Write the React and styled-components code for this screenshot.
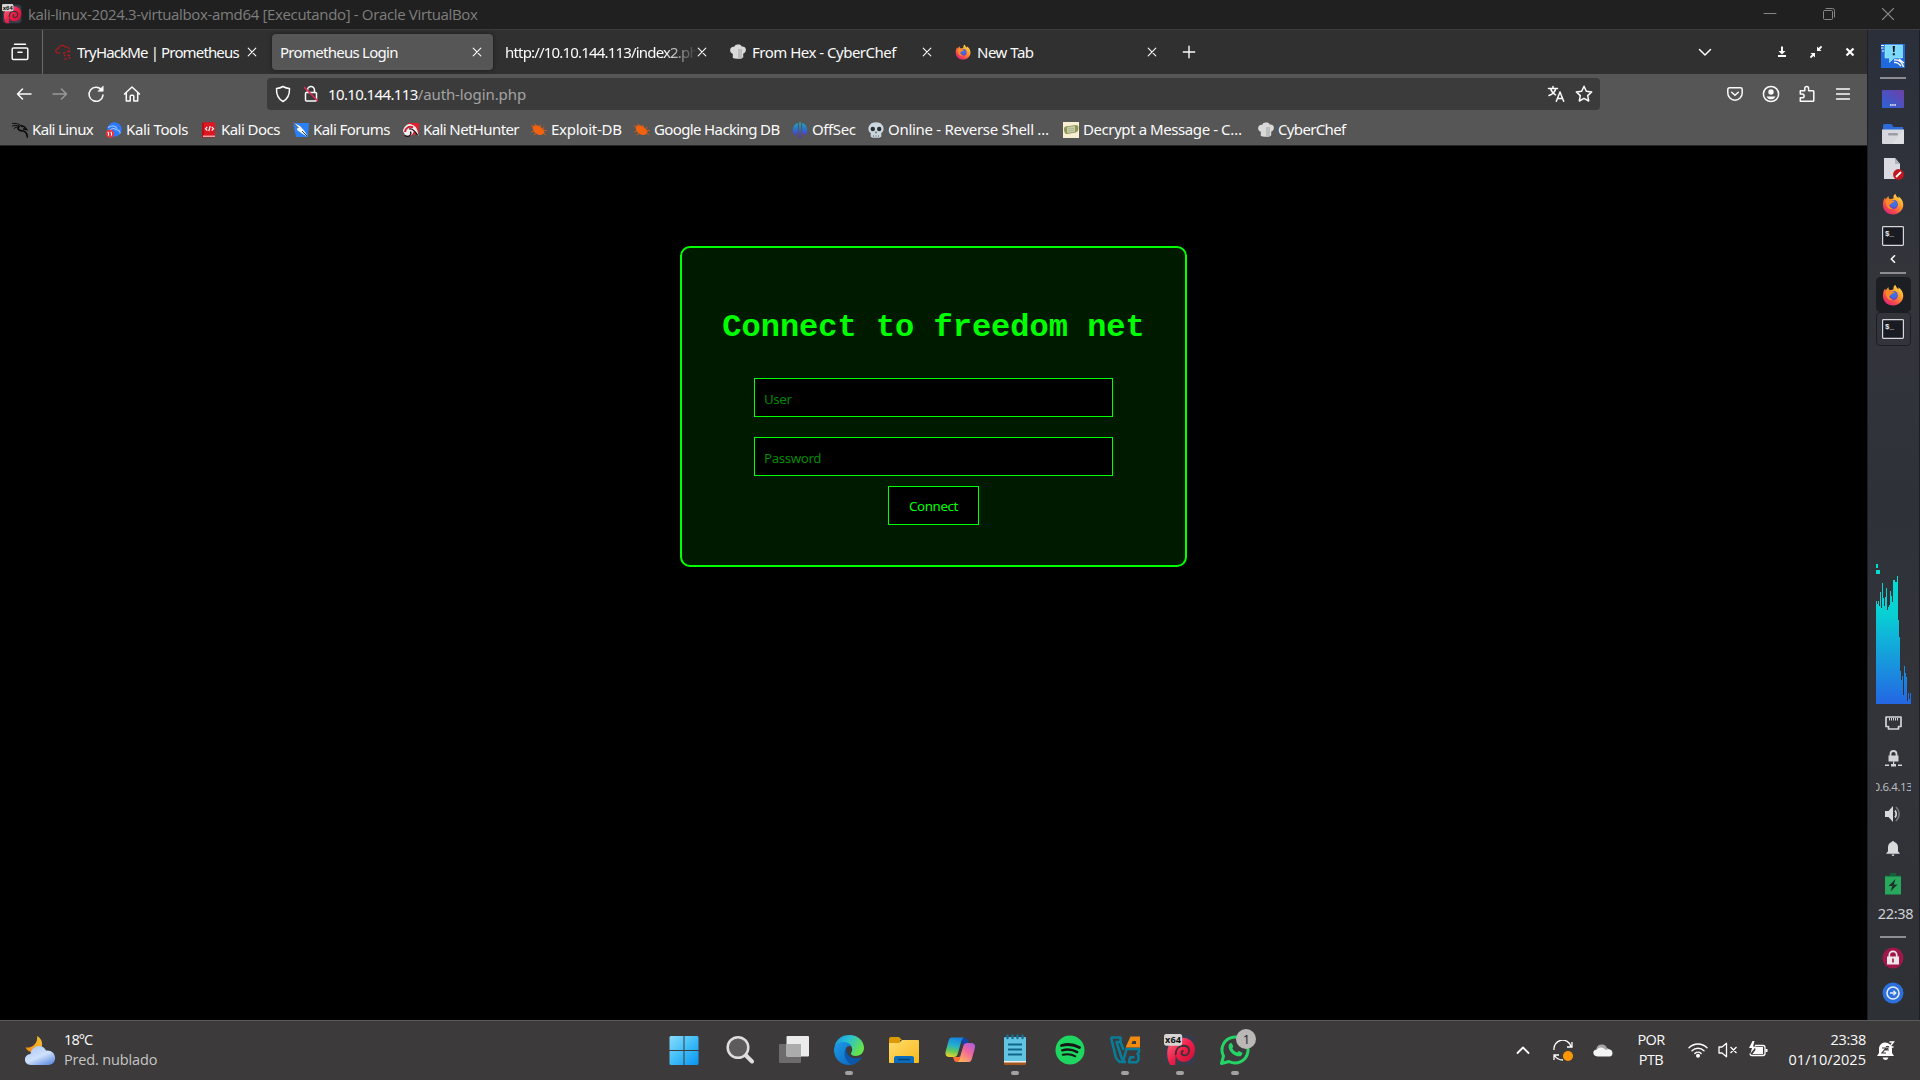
import React from 'react';
import styled, { createGlobalStyle, css } from 'styled-components';

const Global = createGlobalStyle`
  * { box-sizing: border-box; }
  body { margin: 0; background: #000; overflow: hidden; }
  svg { display: block; flex: none; }
`;

const Desktop = styled.div`
  width: 1920px;
  height: 1080px;
  display: flex;
  flex-direction: column;
  font-family: 'Noto Sans', 'Open Sans', sans-serif;
  font-size: 15px;
  color: #fbfbfb;
  background: #000;
`;

const Label = styled.span`
  white-space: pre;
  line-height: 20px;
  letter-spacing: ${(p) => p.$ls || 0}px;
`;
const RaisedLabel = styled(Label)`
  padding-bottom: 2px;
`;

/* ---- host window title bar ---- */
const TitleBar = styled.header`
  height: 30px;
  flex: none;
  display: flex;
  align-items: center;
  padding: 0 25px 1px 2px;
  background: #202020;
  border-bottom: 1px solid #3d3d3d;
  color: #7e7e7e;
  font-family: 'Open Sans', 'Noto Sans', sans-serif;
`;
const Title = styled(Label)`
  flex: 1;
  margin-left: 6px;
`;
const WindowControls = styled.div`
  display: flex;
  gap: 45px;
  color: #858585;
`;

/* ---- guest screen ---- */
const Guest = styled.div`
  height: 990px;
  flex: none;
  display: flex;
`;
const Browser = styled.main`
  width: 1867px;
  display: flex;
  flex-direction: column;
`;
const TabBar = styled.div`
  height: 44px;
  flex: none;
  display: flex;
  align-items: center;
  background: #303030;
`;
const RecentButton = styled.div`
  width: 43px;
  height: 44px;
  padding-left: 11px;
  display: flex;
  align-items: center;
  border-right: 1px solid #6a6a6a;
`;
const TabList = styled.div`
  display: flex;
  gap: 4px;
  margin-left: 4px;
`;
const Tab = styled.div`
  width: 221px;
  height: 36px;
  padding: 0 11px 0 8px;
  display: flex;
  align-items: center;
  border-radius: 4px;
  ${(p) =>
    p.$active &&
    css`
      background: #565656;
      box-shadow: 0 0 4px rgba(0, 0, 0, 0.45);
    `}
`;
const TabText = styled(Label)`
  flex: 1;
  overflow: hidden;
  margin-left: ${(p) => (p.$icon ? 6 : 0)}px;
  ${(p) =>
    p.$fade &&
    css`
      mask-image: linear-gradient(to right, #000 160px, transparent 192px);
    `}
`;
const NewTab = styled.div`
  margin-left: 14px;
`;
const TabBarEnd = styled.div`
  margin-left: auto;
  display: flex;
  align-items: center;
  padding-right: 10px;
`;
const GuestControls = styled.div`
  margin-left: 63px;
  display: flex;
  gap: 20px;
`;

const NavBar = styled.div`
  height: 40px;
  flex: none;
  display: flex;
  align-items: center;
  background: #565656;
  padding: 0 15px;
`;
const NavButtons = styled.div`
  width: 252px;
  display: flex;
  gap: 18px;
`;
const UrlBar = styled.div`
  width: 1333px;
  height: 32px;
  display: flex;
  align-items: center;
  padding: 0 7px;
  background: #3b3b3b;
  border-radius: 4px;
`;
const SiteIcons = styled.div`
  display: flex;
  gap: 10px;
`;
const Host = styled(Label)`
  margin-left: 8px;
`;
const Path = styled(Label)`
  flex: 1;
  color: #a3a3a3;
`;
const UrlIcons = styled.div`
  display: flex;
  gap: 10px;
`;
const NavEnd = styled.div`
  margin-left: auto;
  display: flex;
  gap: 18px;
`;

const Bookmarks = styled.div`
  height: 32px;
  flex: none;
  display: flex;
  align-items: center;
  padding-left: 12px;
  background: #565656;
  border-bottom: 1px solid #262626;
`;
const Bookmark = styled.div`
  width: ${(p) => p.$w}px;
  display: flex;
  align-items: center;
  gap: 4px;
`;

/* ---- page ---- */
const Page = styled.section`
  flex: 1;
  padding-top: 100px;
  display: flex;
  justify-content: center;
  align-items: flex-start;
  background: #000;
`;
const LoginCard = styled.form`
  width: 507px;
  height: 321px;
  padding: 62px 0 0;
  display: flex;
  flex-direction: column;
  align-items: center;
  background: #001a00;
  border: 2px solid #0f0;
  border-radius: 10px;
`;
const Heading = styled.h1`
  margin: 0 0 32px;
  font: bold 32px/36px 'Liberation Mono', monospace;
  color: #0f0;
  white-space: pre;
`;
const Field = styled.input`
  width: 359px;
  height: 39px;
  margin-bottom: ${(p) => p.$gap}px;
  padding: 2px 10px 0 9px;
  background: #000;
  border: 1px solid #0f0;
  border-radius: 0;
  outline: none;
  color: #0f0;
  font: 13.333px 'Noto Sans', sans-serif;
  letter-spacing: -0.4px;
  &::placeholder {
    color: #008800;
    opacity: 1;
  }
`;
const Submit = styled.button`
  width: 91px;
  height: 39px;
  padding: 1px 0 0;
  background: #000;
  border: 1px solid #0f0;
  color: #0f0;
  font: 13.333px 'Noto Sans', sans-serif;
  letter-spacing: -0.4px;
`;

/* ---- guest side panel ---- */
const SidePanel = styled.aside`
  width: 53px;
  padding-right: 1px;
  display: flex;
  flex-direction: column;
  align-items: center;
  background: linear-gradient(#2a2f3a, #33353b 25%, #2e3238 48%, #33343a 70%, #2d3035);
  border-left: 1px solid #1c1f26;
  border-right: 1px solid #1c1f26;
`;
const Slot = styled.div`
  margin-top: ${(p) => p.$mt || 0}px;
  height: ${(p) => p.$h}px;
  flex: none;
  display: flex;
  align-items: center;
  justify-content: center;
`;
const Divider = styled.div`
  width: 26px;
  height: 2px;
  flex: none;
  margin-top: ${(p) => p.$mt}px;
  background: #8b8d92;
`;
const WindowButton = styled.div`
  width: 35px;
  height: ${(p) => (p.$active ? 35 : 34)}px;
  flex: none;
  margin-top: ${(p) => p.$mt || 0}px;
  display: flex;
  align-items: center;
  justify-content: center;
  border-radius: 4px;
  border: 1px solid #1b1e24;
  background: ${(p) => (p.$active ? '#1b1e23' : 'transparent')};
`;
const IpText = styled(Label)`
  width: 35px;
  display: flex;
  justify-content: center;
  overflow: hidden;
  font-size: 11.5px;
  line-height: 16px;
  color: #b9bbbf;
`;
const PanelClock = styled(Label)`
  font-size: 14.5px;
  margin-left: 5px;
  padding-bottom: 2px;
  color: #d0d1d4;
`;

/* ---- host taskbar ---- */
const Taskbar = styled.footer`
  height: 60px;
  flex: none;
  display: grid;
  grid-template-columns: 656.5px 1fr 404px;
  align-items: stretch;
  background: #3c3a3a;
  border-top: 1px solid #5a5858;
  font-family: 'Open Sans', 'Noto Sans', sans-serif;
`;
const Weather = styled.div`
  display: flex;
  align-items: center;
  padding-left: 24px;
  gap: 8px;
`;
const Stack = styled.div`
  display: flex;
  flex-direction: column;
  align-items: ${(p) => p.$align || 'flex-start'};
  padding-bottom: 2px;
  font-size: 14.5px;
`;
const Muted = styled(Label)`
  color: #c6c5c5;
`;
const Apps = styled.div`
  display: flex;
`;
const AppButton = styled.div`
  width: 55.1px;
  position: relative;
  display: flex;
  flex-direction: column;
  align-items: center;
  padding-top: 13px;
`;
const Running = styled.div`
  width: 8px;
  height: 4px;
  margin-top: 5px;
  border-radius: 2px;
  background: #a3a2a2;
`;
const Badge = styled.span`
  position: absolute;
  top: 8px;
  left: 29px;
  width: 20px;
  height: 20px;
  border-radius: 50%;
  background: #b9b8b7;
  color: #222;
  font-size: 13px;
  line-height: 20px;
  text-align: center;
`;
const Tray = styled.div`
  display: flex;
  align-items: center;
`;
const TrayItem = styled.div`
  width: ${(p) => p.$w}px;
  display: flex;
  justify-content: ${(p) => (p.$end ? 'flex-end' : 'center')};
`;

/* ---- icons ---- */
const Line = ({ size = 18, sw = 1.5, children, ...rest }) => (
  <svg width={size} height={size} viewBox="0 0 18 18" fill="none" stroke="currentColor" strokeWidth={sw} strokeLinecap="round" strokeLinejoin="round" {...rest}>
    {children}
  </svg>
);
const Close = () => (
  <Line size={10} viewBox="0 0 10 10" sw={1.1}><path d="M1.2 1.2l7.6 7.6M8.8 1.2L1.2 8.8" /></Line>
);
const DebianSwirl = ({ size }) => (
  <svg width={size} height={size} viewBox="0 0 30 30">
    <defs>
      <linearGradient id="swirl" x1="0" y1="0" x2="1" y2="1">
        <stop offset="0" stopColor="#ff6d84" /><stop offset=".5" stopColor="#ee2049" /><stop offset="1" stopColor="#c30b34" />
      </linearGradient>
    </defs>
    <path d="M4 1h22l3 3v22l-3 3H4l-3-3V4z" fill="#373c4d" />
    <path d="M3 18C3 9 9 3.500 17 3.500c7 0 12 4.500 12 11C29 21.500 24 26.500 18 26c-4.500-.4-7-3.500-7-7.500L10.500 29H6C4 26 3 22 3 18z" fill="url(#swirl)" />
    <path d="M11 19c0-5 3-8 7-8 3.500 0 5.500 2 5.500 4.700 0 3.300-3 5-5.500 4.200-2-.7-2.200-3.200-.3-4.100" fill="none" stroke="#3a3038" strokeWidth="1.700" strokeLinecap="round" />
    <rect x="0" y="0" width="17" height="11" rx="2" fill="#d6d4d2" />
    <text x="8.5" y="8.800" textAnchor="middle" fontFamily="Open Sans, sans-serif" fontWeight="700" fontSize="8.600" textLength="15" fill="#111">x64</text>
  </svg>
);
const Firefox = ({ size = 16 }) => (
  <svg width={size} height={size} viewBox="0 0 24 24">
    <defs>
      <linearGradient id="fox" x1=".85" y1=".05" x2=".2" y2=".95">
        <stop offset="0" stopColor="#ffe14a" /><stop offset=".4" stopColor="#ff9a2b" /><stop offset=".75" stopColor="#f5484b" /><stop offset="1" stopColor="#e0267a" />
      </linearGradient>
    </defs>
    <path d="M14.500.8c1 2.400 1.500 3 3.400 5 .2-1.200.1-1.600-.2-2.300 3.500 2.300 5.600 5.700 5.500 9.700C23 19 18.300 23.400 12.100 23.400 5.700 23.400 1 18.800 1 12.700c0-3.200 1-5.700 2.300-7.700l.7 2C5 5.500 5.800 4.400 7 3.200c0 1.700.5 2.700 1.500 3.500l4-.6C12.200 3.800 12.800 2.200 14.500.8z" fill="url(#fox)" />
    <circle cx="12.300" cy="12.600" r="5" fill="#6a45c9" />
    <circle cx="12.800" cy="11.700" r="3.800" fill="#3f6fe0" />
    <path d="M4 8.500c2-1.600 4.500-1.800 6.500-.8 1.500.7 2.500.9 3.300.9-.5 1.400-1.800 1.700-3 2-1.200.4-.8 2.200-2.800 2.300-.3 2 2 4 4.300 3.800-3 2.200-8.300.3-8.300-8.200z" fill="#ff8a25" />
  </svg>
);
const ChefHat = () => (
  <svg width="16" height="16" viewBox="0 0 16 16">
    <path d="M2.800 14V9.700C.8 9.300-.1 7.500.2 5.400.6 3.100 2.800 2.300 4.300 2.800 4.800.9 6.500.3 8 .5c1.600-.2 3 .3 3.700 2 2-.5 4 .6 4.200 2.900.2 2-.9 3.800-2.700 4.300V13.500l-3 1.300H6z" fill="#d9d9d9" />
    <path d="M8 5h4v9.500H8z" fill="#bdbdbd" />
  </svg>
);
const ThmCloud = () => (
  <svg width="16" height="16" viewBox="0 0 16 16" fill="none" stroke="#b3191f" strokeWidth="1.100">
    <path d="M5.500 9H3C-.2 8.500.2 4.800 3.300 4.800 4 1 8.500.2 10.500 3.200c2.500-.6 4 .8 4 2.800" />
    <path d="M8 9h2.500M12 7.500h3.500M9 11.500h1.500M12.500 11.500h2.500M9.500 15h2M13.500 14h2" strokeWidth="1.400" />
  </svg>
);
const KaliDragon = ({ color = '#0b0b0b' }) => (
  <svg width="16" height="16" viewBox="0 0 16 16" fill="none" stroke={color} strokeLinecap="round">
    <path d="M.5 1.500C4 .8 8 2 10 5M.5 4C3 3 5 3.200 7 4.300M2 6.500C3.500 5 5.500 5 7 5" strokeWidth="1" />
    <path d="M7 4.300C4.500 7 7.500 9 11 9c3 .2 4 3 4.500 6" strokeWidth="1.700" />
    <path d="M9 3.500l3.500 1.300L14.500 7.500 11.500 7" strokeWidth="1.400" />
  </svg>
);
const KaliTools = () => (
  <svg width="16" height="16" viewBox="0 0 16 16">
    <circle cx="8.500" cy="7.500" r="7.200" fill="#2a7bff" />
    <path d="M2 5.500c4-2.500 8-1.800 9 1.200M4 8c2.500-2 4.500-1.800 6-.3 2.500 0 4 1.500 4.200 3.800" fill="none" stroke="#a9cbff" strokeWidth="1.100" />
    <circle cx="4" cy="11.800" r="4" fill="#f0303c" />
    <path d="M2.500 10.300v3.400M5.500 10.300v3.400M1.500 10.300h1M4.500 10.300h1" stroke="#fff" strokeWidth="1" />
  </svg>
);
const KaliDocs = () => (
  <svg width="16" height="16" viewBox="0 0 16 16">
    <path d="M1 .5h13v15H1z" fill="#b80f17" /><path d="M3 .5h11v13H3z" fill="#df1620" /><path d="M2 13.500h12V15H2z" fill="#e8a8a8" />
    <path d="M6.300 4.800L4.500 6.700l1.800 1.900M10.700 4.800l1.800 1.900-1.800 1.900M9.200 4L7.800 9.200" fill="none" stroke="#fff" strokeWidth="1.200" />
  </svg>
);
const KaliForums = () => (
  <svg width="16" height="16" viewBox="0 0 16 16">
    <path d="M0 1h16l-1 14H3z" fill="#2a80f4" />
    <path d="M0 .5l7 3.500 4.500 5L15 15l-6.500-3.800L4 8 4.500 5.500z" fill="#f4f7fa" /><path d="M.5 1l5 5M9 9l5.500 5.500" fill="none" stroke="#1d2430" strokeWidth=".9" />
  </svg>
);
const NetHunter = () => (
  <svg width="16" height="16" viewBox="0 0 16 16">
    <path d="M5 1h11v10L4 15z" fill="#e0202f" />
    <path d="M0 9C1 3.500 6 0 9.500 3c4 1 5.500 6 6 11-2-2.500-3-4.500-5-4.500-.5 4-5.500 6-8.500 3.500z" fill="#f3efef" />
    <path d="M1.500 13.500c4 2 7.500 0 6-4M6 7c3-1 6 2 8.500 6" fill="none" stroke="#1c1118" strokeWidth="1.300" />
    <path d="M2 10c.5-4 4-6.500 8-4.500" fill="none" stroke="#d11a36" strokeWidth="2" />
  </svg>
);
const Exploit = () => (
  <svg width="16" height="16" viewBox="0 0 16 16">
    <path d="M1.500 4C6 1.800 11 4.500 13.500 10 13 12.800 10 13.500 7.500 12.800 4 11.800 1.500 8.500 1.500 4z" fill="#f1620f" />
    <path d="M0 3.500l3 1.500M4 1.500l1 3M9 2.500l.5 3M13 4.500l-1 3.500M16 8.500h-4M15 13l-3-2M0 10l3.500-1M2.500 13L6 11" stroke="#cf5c18" strokeWidth=".9" />
  </svg>
);
const OffSec = () => (
  <svg width="16" height="16" viewBox="0 0 16 16">
    <defs><linearGradient id="off" gradientUnits="userSpaceOnUse" x1="0" y1="0" x2="0" y2="16"><stop offset="0" stopColor="#16b0c4" /><stop offset=".5" stopColor="#2d6ccc" /><stop offset="1" stopColor="#6420dc" /></linearGradient></defs>
    <path fill="url(#off)" d="M5.800.8V10L3 13.800A8 8 0 015.800.8zM10.200.8V10l2.800 3.800A8 8 0 0010.200.8zM7.100.3h1.800v15.400H7.100z" />
  </svg>
);
const Skull = () => (
  <svg width="16" height="16" viewBox="0 0 16 16">
    <path d="M8 .2c4.700 0 7.600 2.800 7.600 6.800 0 2-1 3.300-2.300 4v3.800l-2 1H4.700l-2-1V11C1.400 10.300.4 9 .4 7 .4 3 3.300.2 8 .2z" fill="#ccd6dd" />
    <circle cx="4.800" cy="7" r="2.200" fill="#292f33" /><circle cx="11.200" cy="7" r="2.200" fill="#292f33" />
    <path d="M8 9.500l-.8 1.500h1.600zM5.500 13v2M8 13v2M10.500 13v2" fill="#66757f" stroke="#66757f" strokeWidth=".7" />
  </svg>
);
const Scroll = () => (
  <svg width="16" height="16" viewBox="0 0 16 16">
    <rect width="16" height="16" fill="#f8efd2" /><path d="M1 7c0-3 3-3 5-3l7-1q2.500 0 2.500 3T13 10.500L4 12Q1 12 1 7z" fill="#8d9557" /><path d="M4 5l8-1v6l-8 1z" fill="#c6caa8" /><path d="M5 7l6-.7M5 9l6-.7" stroke="#a4aa88" strokeWidth=".7" />
  </svg>
);

const KaliMenu = () => (
  <svg width="24" height="24" viewBox="0 0 24 24">
    <rect width="24" height="24" fill="#2068de" />
    <path d="M0 1.500h3M0 4h2.500M1 7h2" stroke="#fff" strokeWidth="1" />
    <path d="M13 16c5-1 8 2 9.500 7M13 18.500c3-.5 5 1 7 3.500M18 15l5 4" fill="none" stroke="#fff" strokeWidth="1.300" />
    <path d="M4 1h17.500v13H13l-4.500 4.500V14H4z" fill="#7bdafb" stroke="#a9edff" strokeWidth=".6" />
    <path d="M11.700 2h2.200l-.4 6h-1.400zM11.800 9.300h2v2h-2z" fill="#111" />
  </svg>
);
const DesktopIcon = () => (
  <svg width="22" height="18" viewBox="0 0 22 18">
    <defs><linearGradient id="desk" x1="0" y1="1" x2="1" y2="0"><stop offset="0" stopColor="#2b63d8" /><stop offset="1" stopColor="#6f3fa6" /></linearGradient></defs>
    <rect width="22" height="18" rx="1" fill="url(#desk)" /><path d="M8 15h6" stroke="#fff" strokeWidth="1.500" strokeDasharray="1.500 .7" />
  </svg>
);
const Files = () => (
  <svg width="22" height="20" viewBox="0 0 22 20">
    <path d="M1 1.500Q1 0 2.500 0H9q1 0 1.500 1.500T12.500 3H21v4H1z" fill="#2e6ad8" /><path d="M0 5.500h22V19q0 1-1 1H1q-1 0-1-1z" fill="#d6d8dd" /><path d="M22 5.500V20H10z" fill="#e5e6ea" opacity=".6" /><rect x="6" y="9" width="10" height="2.600" rx="1.300" fill="#9b9ea5" />
  </svg>
);
const BlockedDoc = () => (
  <svg width="22" height="22" viewBox="0 0 22 22">
    <path d="M2 0h11l5 6v15H2z" fill="#d9dbe0" /><path d="M13 0l5 6h-5z" fill="#b1b3b8" /><circle cx="16.500" cy="16.500" r="5.400" fill="#c0161f" /><path d="M14 19l5-5" stroke="#fff" strokeWidth="1.800" />
  </svg>
);
const Terminal = () => (
  <svg width="22" height="20" viewBox="0 0 22 20">
    <rect x=".6" y=".6" width="20.800" height="18.800" rx=".8" fill="#181b22" stroke="#d5d7da" strokeWidth="1.200" />
    <text x="3" y="9.500" fontFamily="Liberation Mono, monospace" fontWeight="700" fontSize="7.500" fill="#e8e9eb">$_</text>
  </svg>
);
const bars = [103,100,103,98,112,96,121,106,98,107,116,94,97,99,113,108,102,124,124,122,122,128,84,67,33,24,28,9,38,31,27,3,11,5,11];
const CpuGraph = () => (
  <svg width="35" height="140" viewBox="0 0 35 140" shapeRendering="crispEdges">
    <defs><linearGradient id="cpu" gradientUnits="userSpaceOnUse" x1="0" y1="0" x2="0" y2="140"><stop offset="0" stopColor="#00ded2" /><stop offset=".35" stopColor="#08d0d4" /><stop offset="1" stopColor="#2466e4" /></linearGradient></defs>
    <g fill="url(#cpu)">
      <rect width="2" height="4" /><rect y="6" width="4" height="4" />
      {bars.map((h, i) => <rect key={i} x={i} y={140 - h} width="1" height={h} />)}
    </g>
  </svg>
);
const Ethernet = () => (
  <svg width="17" height="14" viewBox="0 0 17 14" fill="none" stroke="#d3d4d7"><path d="M1 1h15v9.500h-2.500V13h-10v-2.500H1z" strokeWidth="1.700" strokeLinejoin="round" /><path d="M4.500 2v2.500M6.500 2v2.500M8.500 2v2.500M10.500 2v2.500M12.500 2v2.500" strokeWidth="1" /></svg>
);
const VpnLock = () => (
  <svg width="17" height="17" viewBox="0 0 17 17" fill="#d3d4d7"><path d="M3.500 5.500h10v6h-10z" /><path d="M5.500 6V4a3 3 0 016 0v2" fill="none" stroke="#d3d4d7" strokeWidth="1.800" /><path d="M8 11.500h1.200V14H8zM0 14.500h4V16H0zM6 14h5v2.500H6zM13 14.500h4V16h-4z" /></svg>
);
const PanelVolume = () => (
  <svg width="17" height="16" viewBox="0 0 17 16"><path d="M0 5h3.500L8 0v16l-4.500-5H0z" fill="#d9dadc" /><path d="M10 4.500q2.500 3.500 0 7" fill="none" stroke="#d9dadc" strokeWidth="1.700" /><path d="M11 1q6.500 7 0 14" fill="none" stroke="#73767b" strokeWidth="1.600" /></svg>
);
const PanelBell = () => (
  <svg width="14" height="15" viewBox="0 0 14 15" fill="#d9dadc"><path d="M7 0q1 0 1.200 1 3.800 1 3.800 5.500v3.700l2 2.500H0l2-2.500V6.500Q2 2 5.800 1 6 0 7 0zM5.500 13.500h3Q8 15 7 15t-1.500-1.500z" /></svg>
);
const PanelBattery = () => (
  <svg width="16" height="22" viewBox="0 0 16 22"><path d="M5 0h6v2.500h5V5H0V2.500h5z" fill="#15603a" /><rect y="3.500" width="16" height="18" fill="#27a85c" /><path d="M10.500 6L3.500 13h3.800l-1.800 5.500 7-7H8.800z" fill="#20302c" /></svg>
);
const LockScreen = () => (
  <svg width="22" height="22" viewBox="0 0 22 22"><circle cx="11" cy="11" r="10.500" fill="#a1164a" /><path d="M5 9.500h12v8H5z" fill="#f0e6ea" /><path d="M7.300 10V8a3.700 3.700 0 017.400 0v2" fill="none" stroke="#f0e6ea" strokeWidth="1.700" /><path d="M11 11.500v4" stroke="#a1164a" strokeWidth="1.600" /></svg>
);
const LogOut = () => (
  <svg width="22" height="22" viewBox="0 0 22 22" fill="none" stroke="#e5edfb"><circle cx="11" cy="11" r="10.500" fill="#2d6fdb" stroke="none" /><circle cx="11" cy="11" r="6" strokeWidth="1.600" /><path d="M8 11h5M11.500 8.800l2.200 2.200-2.200 2.200" strokeWidth="1.400" /></svg>
);

const WeatherIcon = () => (
  <svg width="32" height="32" viewBox="0 0 32 32">
    <defs>
      <linearGradient id="moon" x1="1" y1="0" x2="0" y2="1"><stop offset="0" stopColor="#f7c52f" /><stop offset="1" stopColor="#f08716" /></linearGradient>
      <linearGradient id="cloud" x1="0" y1="0" x2=".7" y2="1"><stop offset="0" stopColor="#a5c6f6" /><stop offset=".6" stopColor="#cfe1fb" /><stop offset="1" stopColor="#6e96e6" /></linearGradient>
    </defs>
    <path d="M13 1c6 3 6.500 10 3 14-4 4-12 3-14.500-2.500C8 13.500 14.500 8 13 1z" fill="url(#moon)" />
    <path d="M7 30c-8 0-8-10.500-.5-11C8 10 18.500 8.500 22 15.500c11-1.500 12.500 14.500 2 14.500z" fill="url(#cloud)" />
  </svg>
);
const Start = () => (
  <svg width="30" height="32" viewBox="0 0 30 32"><defs><linearGradient id="win" x1="0" y1="0" x2="1" y2="1"><stop offset="0" stopColor="#8adcfb" /><stop offset=".5" stopColor="#3fbdf8" /><stop offset="1" stopColor="#0a93ee" /></linearGradient></defs>
    <path d="M1.500 2H14.500v14H.5V3zM15.500 2h13l1 1v13h-14zM.5 17h14v14H1.500l-1-1zM15.500 17h14v13l-1 1h-13z" fill="url(#win)" /></svg>
);
const Search = () => (
  <svg width="30" height="32" viewBox="0 0 30 32" fill="none" stroke="#dedede" strokeLinecap="round"><circle cx="14" cy="13.500" r="10.300" strokeWidth="2.500" fill="#5d5b5b" /><path d="M22 21.500l6 6" strokeWidth="4" /></svg>
);
const TaskView = () => (
  <svg width="30" height="32" viewBox="0 0 30 32"><rect y="10" width="22" height="19" rx="1" fill="#6d6b6b" /><rect x="7.500" y="2" width="22.500" height="20.500" rx="1" fill="#ebebeb" /><path d="M7.500 10H22v12.500H7.500z" fill="#acacac" /></svg>
);
const Edge = () => (
  <svg width="32" height="32" viewBox="0 0 32 32">
    <defs><linearGradient id="edgeTop" x1="0" y1="0" x2="1" y2=".5"><stop offset="0" stopColor="#1a8fdc" /><stop offset=".45" stopColor="#27bfd5" /><stop offset="1" stopColor="#66e34a" /></linearGradient><linearGradient id="edgeSide" x1="0" y1="0" x2="1" y2="1"><stop offset="0" stopColor="#1d9be8" /><stop offset="1" stopColor="#0a63bb" /></linearGradient></defs>
    <path d="M1.500 12C4 4 10 1 16.500 1 25 1 31 7 31 14c0 5-4 8-8.500 8-3 0-4.500-1-4.500-2.500 0-1 1.200-1.500 1.200-4C19.200 12 16 9.500 12 9c-5-.5-8.500 1-10.500 3z" fill="url(#edgeTop)" />
    <path d="M1 16C1 10 6 7.500 11.500 8c3.500.3 6.500 2 7.500 5-4-3-7.500 1-6.500 6 1.200 5 5.500 9 11 8.500C20 31 17 31 16 31 7.500 31 1 24.500 1 16z" fill="url(#edgeSide)" />
    <path d="M13.500 14c-3 3.500-2.500 10.500 2 14.500 1.500 1.500 3.500 2.500 5 2 4-1.500 7-4 8.500-7.500-5 2.500-12.500 1.500-15-4-.8-2-.7-3.500-.5-5z" fill="#0d57a8" />
  </svg>
);
const Folder = () => (
  <svg width="30" height="32" viewBox="0 0 30 32"><defs><linearGradient id="fold" x1="0" y1="0" x2="1" y2="1"><stop offset="0" stopColor="#ffdc6b" /><stop offset="1" stopColor="#f8b91c" /></linearGradient></defs><path d="M0 5q0-2 2-2h8l3 3h-2v4H0z" fill="#dc9a04" /><path d="M0 9h10l3-3h16q1 0 1 1v21q0 1-1 1H1q-1 0-1-1z" fill="url(#fold)" /><path d="M5 29v-5q0-2 2-2h16q2 0 2 2v5z" fill="#0c6cbc" /><path d="M9 25.500h12" stroke="#06417c" strokeWidth="1.500" /></svg>
);
const Copilot = () => (
  <svg width="30" height="32" viewBox="0 0 30 32">
    <defs>
      <linearGradient id="copA" x1=".5" y1="0" x2=".3" y2="1"><stop offset="0" stopColor="#1585e0" /><stop offset=".4" stopColor="#25b0cc" /><stop offset=".7" stopColor="#62c95a" /><stop offset="1" stopColor="#f0d22b" /></linearGradient>
      <linearGradient id="copB" x1="1" y1="0" x2=".3" y2="1"><stop offset="0" stopColor="#a55bea" /><stop offset=".5" stopColor="#f0679d" /><stop offset="1" stopColor="#ffb15b" /></linearGradient>
    </defs>
    <path d="M16 4h3.500c2 0 3 1 3.500 2.500L24.500 11H18z" fill="#1345a8" />
    <path d="M7 3.500h12c-2 1-2.500 3-3.200 5.500L13 19c-.8 3-2 4-4.500 4H4.500C1 23-.2 20.500.8 17L3.500 7C4.200 4.500 5 3.500 7 3.500z" fill="url(#copA)" />
    <path d="M12 28c2-1 2.500-3 3.200-5.500L18 13c.8-3 2-4 4.500-4h3.500c3.500 0 4.700 2 3.700 5.500L27 24.500c-.7 2.500-1.500 3.500-3.500 3.500z" fill="url(#copB)" />
    <path d="M8 23h6l1.500-1C15 26 13.500 28 11.500 28 9.500 28 9 26 8 23z" fill="#ff6c36" />
  </svg>
);
const Notepad = () => (
  <svg width="24" height="32" viewBox="0 0 24 32"><path d="M1 27h22v3q0 1-1 1H2q-1 0-1-1z" fill="#a3561c" /><path d="M1 26h22v2.500H1z" fill="#f0f0f0" /><path d="M1 4q0-1 1-1h20q1 0 1 1v23H1z" fill="#63c4e2" /><path d="M4.500 1.500v2.500M9.500 1.500v2.500M14.500 1.500v2.500M19.500 1.500v2.500" stroke="#167093" strokeWidth="2.400" strokeLinecap="round" /><path d="M5 10.500h14M5 15.500h14M5 20.500h14" stroke="#0f6687" strokeWidth="1.800" /></svg>
);
const Spotify = () => (
  <svg width="30" height="32" viewBox="0 0 30 32" fill="none" stroke="#161616" strokeLinecap="round"><circle cx="15" cy="16" r="14.500" fill="#1ed760" stroke="none" /><path d="M6.500 11.500c6-1.800 12.500-1 18 2" strokeWidth="2.800" /><path d="M7.200 16.300c5-1.400 10.500-.8 15 1.800" strokeWidth="2.400" /><path d="M7.800 20.700c4.500-1 8.800-.6 12.500 1.600" strokeWidth="2" /></svg>
);
const VirtualBox = () => (
  <svg width="32" height="32" viewBox="0 0 32 32" fill="none" strokeWidth="2.600" strokeLinejoin="round">
    <path d="M2 3.500h9.500V8H7.500l6.500 20h-3.500L7 24 2 3.500M11.500 8l3 8" stroke="#087c98" />
    <path d="M14 28l3.500-13H30v2.500l-1.500 2.500 1 1.500V26l-2 2.300H20l1.200-5h4.300M14 28h3" stroke="#087c98" />
    <path d="M21.500 2.500H31V13.500H16.500z" fill="#f18a11" /><path d="M23.500 7h3.500v3h-4.500z" fill="#3c3a3a" />
  </svg>
);
const WhatsApp = () => (
  <svg width="32" height="32" viewBox="0 0 32 32" fill="none" stroke="#25d366"><path d="M2.500 29.500l2-7.500A13 13 0 1110 27.500z" strokeWidth="3" strokeLinejoin="round" /><path d="M11 9.500c1-.8 1.800-.5 2.200.5l1 2.300c.2.800-1 1.700-.8 2.300 1 2 2.500 3.300 4.500 4 .7.200 1.300-1.500 2-1.500l3 1.500c1 .6.3 2.500-1 3.300-4.500 2-12.500-4-12.300-9.500 0-1 .5-2.300 1.400-2.900z" fill="#25d366" stroke="none" /></svg>
);

const tabs = [
  { text: 'TryHackMe | Prometheus', ls: -0.85, icon: <ThmCloud /> },
  { text: 'Prometheus Login', ls: -0.72, active: true },
  { text: 'http://10.10.144.113/index2.php', ls: -0.82, fade: true },
  { text: 'From Hex - CyberChef', ls: -0.5, icon: <ChefHat /> },
  { text: 'New Tab', ls: -0.5, icon: <Firefox /> },
];
const bookmarks = [
  ['Kali Linux', 94, -0.65, <KaliDragon />],
  ['Kali Tools', 95, -0.37, <KaliTools />],
  ['Kali Docs', 92, -0.55, <KaliDocs />],
  ['Kali Forums', 110, -0.55, <KaliForums />],
  ['Kali NetHunter', 128, -0.6, <NetHunter />],
  ['Exploit-DB', 103, -0.25, <Exploit />],
  ['Google Hacking DB', 158, -0.63, <Exploit />],
  ['OffSec', 76, -0.39, <OffSec />],
  ['Online - Reverse Shell …', 195, -0.29, <Skull />],
  ['Decrypt a Message - C…', 195, -0.42, <Scroll />],
  ['CyberChef', 100, -0.65, <ChefHat />],
];
const apps = [
  [<Start />], [<Search />], [<TaskView />], [<Edge />, true], [<Folder />], [<Copilot />],
  [<Notepad />, true], [<Spotify />], [<VirtualBox />, true], [<DebianSwirl size={32} />, true], [<WhatsApp />, true, '1'],
];

function GuestBrowser() {
  return (
    <Browser>
      <TabBar>
        <RecentButton>
          <Line><path d="M3.500 1.200h11M2.500 5h13q1.300 0 1.300 1.300v9q0 1.300-1.300 1.300h-13q-1.300 0-1.300-1.300v-9Q1.200 5 2.500 5zM7 9.300h4" /></Line>
        </RecentButton>
        <TabList>
          {tabs.map((t) => (
            <Tab key={t.text} $active={t.active}>
              {t.icon}
              <TabText $ls={t.ls} $icon={!!t.icon} $fade={t.fade}>{t.text}</TabText>
              <Close />
            </Tab>
          ))}
        </TabList>
        <NewTab><Line size={14} viewBox="0 0 14 14" sw={1.4}><path d="M7 1.300v11.400M1.300 7h11.400" /></Line></NewTab>
        <TabBarEnd>
          <Line size={14} viewBox="0 0 14 14"><path d="M1.500 4.500L7 10l5.500-5.500" /></Line>
          <GuestControls>
            <svg width="14" height="14" viewBox="0 0 14 14" fill="currentColor"><path d="M6 1.500h2V6h2.500L7 9.500 3.500 6H6zM3 10h8v2H3z" /></svg>
            <svg width="14" height="14" viewBox="0 0 14 14" fill="currentColor"><path d="M8 1.500l1.500 1.500L12 .8 13.200 2 11 4.500l1.500 1.500H8zM6 12.500L4.500 11 2 13.200.8 12 3 9.500 1.500 8H6z" /></svg>
            <svg width="14" height="14" viewBox="0 0 14 14" fill="none" stroke="currentColor" strokeWidth="2.200"><path d="M3.500 3.500l7 7M10.500 3.500l-7 7" /></svg>
          </GuestControls>
        </TabBarEnd>
      </TabBar>

      <NavBar>
        <NavButtons>
          <Line><path d="M16 9H2.500M7.500 4L2.500 9l5 5" /></Line>
          <Line opacity=".4"><path d="M2 9h13.500M10.500 4l5 5-5 5" /></Line>
          <Line><path d="M14.700 5.200A7 7 0 1016 10" /><path d="M11.200 6.300h5v-5z" fill="currentColor" strokeWidth=".6" /></Line>
          <Line><path d="M1.500 9L9 2l7.500 7M3.300 7.500V16h3.900v-4.800q0-1 1-1h1.600q1 0 1 1V16h3.900V7.500" /></Line>
        </NavButtons>
        <UrlBar>
          <SiteIcons>
            <Line><path d="M9 1.500c2 1.300 4 1.900 6.500 2 .2 5.500-1 10-6.500 13C3.500 13.500 2.300 9 2.500 3.500c2.500-.1 4.500-.7 6.500-2z" /></Line>
            <Line><path d="M5.500 7.500V5a3.500 3.500 0 017 0v2.500M4.500 7.500h9q1 0 1 1V15q0 1-1 1h-9q-1 0-1-1V8.500q0-1 1-1z" /><path d="M2.500 2.500l13 13" stroke="#e22850" /></Line>
          </SiteIcons>
          <Host $ls={-0.63}>10.10.144.113</Host>
          <Path $ls={-0.1}>/auth-login.php</Path>
          <UrlIcons>
            <Line><path d="M1.500 3.500h9M6 1.500v2M8.800 3.500C8 7 5 9.500 2 10.500M3.500 3.500C4.500 6.500 6 8.500 8.500 9.800M9.300 16.300l3.700-9.300 3.700 9.300M10.500 13.500h5" strokeWidth="1.500" /></Line>
            <Line><path d="M9 1.300l2.300 4.900 5.400.7-4 3.700 1 5.400L9 13.300 4.300 16l1-5.400-4-3.700 5.400-.7z" /></Line>
          </UrlIcons>
        </UrlBar>
        <NavEnd>
          <Line><path d="M3.500 2.800h11q1.700 0 1.700 1.700V8a7.200 7.200 0 01-14.400 0V4.500q0-1.700 1.700-1.700zM5.700 7.200L9 10.300l3.300-3.100" /></Line>
          <Line><circle cx="9" cy="9" r="7.600" /><circle cx="9" cy="7" r="2.700" fill="currentColor" stroke="none" /><path d="M4.500 11.500h9c-1 2-2.500 2.800-4.500 2.800s-3.500-.8-4.500-2.800z" fill="currentColor" stroke="none" /></Line>
          <Line><path d="M2.300 7.500V5.700h4.500V3.500a1.900 1.900 0 013.800 0v2.200H15q.8 0 .8.800v9q0 .8-.8.8H2.300v-3.500h1.900a1.900 1.900 0 000-3.800H2.300z" /></Line>
          <Line><path d="M2.500 4h13M2.500 9h13M2.500 14h13" strokeWidth="1.300" /></Line>
        </NavEnd>
      </NavBar>

      <Bookmarks>
        {bookmarks.map(([text, w, ls, icon]) => (
          <Bookmark key={text} $w={w}>{icon}<RaisedLabel $ls={ls}>{text}</RaisedLabel></Bookmark>
        ))}
      </Bookmarks>

      <Page>
        <LoginCard>
          <Heading>Connect to freedom net</Heading>
          <Field $gap={20} placeholder="User" />
          <Field $gap={10} placeholder="Password" />
          <Submit type="button">Connect</Submit>
        </LoginCard>
      </Page>
    </Browser>
  );
}

function GuestPanel() {
  return (
    <SidePanel>
      <Slot $mt={14} $h={24}><KaliMenu /></Slot>
      <Divider $mt={9} />
      <Slot $mt={11} $h={18}><DesktopIcon /></Slot>
      <Slot $mt={16} $h={20}><Files /></Slot>
      <Slot $mt={14} $h={22}><BlockedDoc /></Slot>
      <Slot $mt={13} $h={22}><Firefox size={22} /></Slot>
      <Slot $mt={11} $h={20}><Terminal /></Slot>
      <Slot $mt={9} $h={8}><Line size={8} viewBox="0 0 8 8" sw={1.6}><path d="M5.500.8L2.300 4l3.200 3.200" /></Line></Slot>
      <Divider $mt={9} />
      <WindowButton $mt={3} $active><Firefox size={22} /></WindowButton>
      <WindowButton><Terminal /></WindowButton>
      <Slot $mt={218} $h={140}><CpuGraph /></Slot>
      <Slot $mt={12} $h={14}><Ethernet /></Slot>
      <Slot $mt={20} $h={17}><VpnLock /></Slot>
      <Slot $mt={12} $h={16}><IpText $ls={-0.4}>0.6.4.13</IpText></Slot>
      <Slot $mt={11} $h={16}><PanelVolume /></Slot>
      <Slot $mt={19} $h={15}><PanelBell /></Slot>
      <Slot $mt={17} $h={22}><PanelBattery /></Slot>
      <Slot $mt={9} $h={20}><PanelClock $ls={-0.3}>22:38</PanelClock></Slot>
      <Divider $mt={12} />
      <Slot $mt={9} $h={22}><LockScreen /></Slot>
      <Slot $mt={13} $h={22}><LogOut /></Slot>
    </SidePanel>
  );
}

function HostTaskbar() {
  return (
    <Taskbar>
      <Weather>
        <WeatherIcon />
        <Stack>
          <Label $ls={-0.9}>18°C</Label>
          <Muted $ls={-0.15}>Pred. nublado</Muted>
        </Stack>
      </Weather>
      <Apps>
        {apps.map(([icon, running, badge], i) => (
          <AppButton key={i}>{icon}{running && <Running />}{badge && <Badge>{badge}</Badge>}</AppButton>
        ))}
      </Apps>
      <Tray>
        <TrayItem $w={14}><Line size={14} viewBox="0 0 14 14" sw={1.8}><path d="M1.500 9L7 3.500 12.500 9" /></Line></TrayItem>
        <TrayItem $w={66}>
          <svg width="22" height="22" viewBox="0 0 22 22" fill="none" stroke="#fff" strokeWidth="1.300"><path d="M2 10A8.700 8.700 0 0119 6.500M20 2v5h-5M11 20c-4 0-7-2-9-5M2 20v-5h5" /><circle cx="16" cy="16" r="5" fill="#ff9800" stroke="none" /></svg>
        </TrayItem>
        <TrayItem $w={14}>
          <svg width="20" height="16" viewBox="0 0 20 16"><path d="M4 9A5 5 0 019 1.500c3 0 4 1.500 4.800 3.200L19 8z" fill="#a7a6a6" /><path d="M4.500 13.500C-1 13-1 6.500 4 6.500 6 3.500 11 4 12.500 7c3.500-2 7 0 7 3s-2 3.500-4 3.500z" fill="#f4f4f4" /></svg>
        </TrayItem>
        <TrayItem $w={82}>
          <Stack $align="center"><Label $ls={-0.6}>POR</Label><Label $ls={-0.6}>PTB</Label></Stack>
        </TrayItem>
        <TrayItem $w={12}>
          <svg width="20" height="18" viewBox="0 0 20 18" fill="none" stroke="#fff" strokeWidth="1.400" strokeLinecap="round"><path d="M1 5.800a12.500 12.500 0 0118 0M4 8.800a8.500 8.500 0 0112 0M6.800 11.500a4.600 4.600 0 016.400 0" /><circle cx="10" cy="13.800" r="1.300" fill="#fff" /></svg>
        </TrayItem>
        <TrayItem $w={47}>
          <svg width="20" height="18" viewBox="0 0 20 18" fill="none" stroke="#fff" strokeWidth="1.300" strokeLinejoin="round"><path d="M1 5h3l4.500-3.800v13.600L4 11H1zM12.500 5l6 6M18.500 5l-6 6" /></svg>
        </TrayItem>
        <TrayItem $w={14}>
          <svg width="20" height="20" viewBox="0 0 20 20" fill="none" stroke="#fff" strokeWidth="1.300"><path d="M7 4.500h8q2 0 2 2v6q0 2-2 2H4q-2 0-2-2" /><path d="M18.500 8v3" strokeWidth="2" /><path d="M7 6h8v7H4.500l3-4z" fill="#fff" stroke="none" /><path d="M4.500 0L1 7h3l-1.500 5.500 5.500-7H5L6.500 0z" fill="#fff" stroke="none" /></svg>
        </TrayItem>
        <TrayItem $w={101} $end>
          <Stack $align="flex-end"><Label $ls={-0.3}>23:38</Label><Label $ls={0.05}>01/10/2025</Label></Stack>
        </TrayItem>
        <TrayItem $w={39}>
          <svg width="20" height="20" viewBox="0 0 20 20"><path d="M1 15l2-3V8c0-4 3-6.500 6-6.500 4 0 7 3 7 6.500v4l2 3zM6.500 16.500h6Q11.500 19 9.500 19t-3-2.500z" fill="#fff" /><path d="M6 7h4l-4 5h4M10 5.500h3.500L10 9h3" fill="none" stroke="#3c3a3a" strokeWidth="1.200" /><path d="M13.500 1h4l-4 5h4" fill="none" stroke="#fff" strokeWidth="1.400" /></svg>
        </TrayItem>
      </Tray>
    </Taskbar>
  );
}

export default function App() {
  return (
    <Desktop>
      <Global />
      <TitleBar>
        <DebianSwirl size={20} />
        <Title $ls={-0.34}>kali-linux-2024.3-virtualbox-amd64 [Executando] - Oracle VirtualBox</Title>
        <WindowControls>
          <Line size={14} viewBox="0 0 14 14" sw={1}><path d="M1 6.500h12" /></Line>
          <Line size={14} viewBox="0 0 14 14" sw={1}><path d="M2.500 3.500h7q1 0 1 1v7q0 1-1 1h-7q-1 0-1-1v-7q0-1 1-1zM4 1.500h6.500q2 0 2 2V10" /></Line>
          <Line size={14} viewBox="0 0 14 14" sw={1.1}><path d="M1.500 1.500l11 11M12.500 1.500l-11 11" /></Line>
        </WindowControls>
      </TitleBar>
      <Guest>
        <GuestBrowser />
        <GuestPanel />
      </Guest>
      <HostTaskbar />
    </Desktop>
  );
}
